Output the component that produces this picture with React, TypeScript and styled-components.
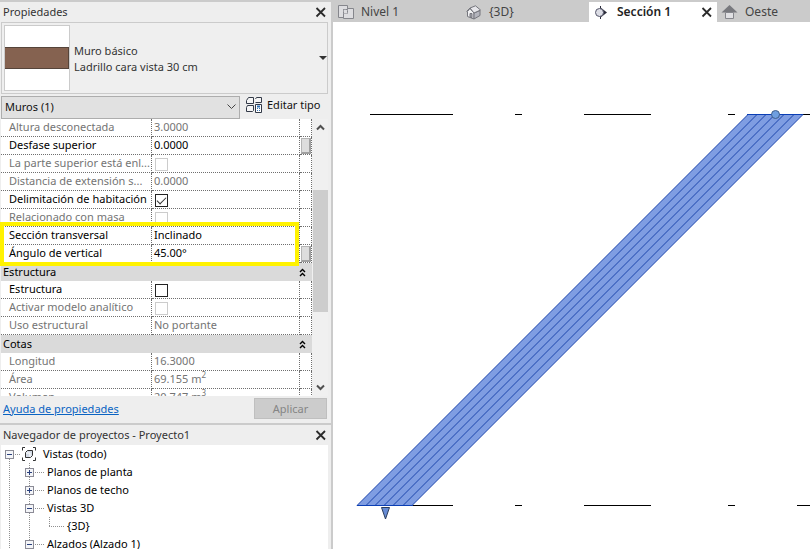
import React, { ReactNode } from "react";
import styled, { createGlobalStyle, css } from "styled-components";

const GlobalStyle = createGlobalStyle`
  *, *::before, *::after { box-sizing: border-box; }
  html, body, #root { height: 100%; }
  body {
    margin: 0;
    overflow: hidden;
    background: #ffffff;
    color: #111111;
    font: 11px/18px "Noto Sans", "Open Sans", sans-serif;
  }
  button, select, input { font: inherit; color: inherit; margin: 0; }
`;

const dots = "#6f6f6f";

const Shell = styled.div`
  display: grid;
  grid-template-columns: 333px minmax(0, 1fr);
  height: 100vh;
  overflow: hidden;
`;

const Sidebar = styled.aside`
  display: flex;
  flex-direction: column;
  min-height: 0;
  background: #eeeeee;
  border-top: 2px solid #cbcbcb;
  border-right: 2px solid #cbcbcb;
`;

const Panel = styled.section<{ $grow?: boolean }>`
  display: flex;
  flex-direction: column;
  padding: 0 3px 0 1px;
  ${(p) =>
    p.$grow &&
    css`
      flex: 1;
      min-height: 0;
      overflow: hidden;
      border-top: 2px solid #cbcbcb;
    `}
`;

const PanelHeader = styled.header`
  display: flex;
  align-items: center;
  justify-content: space-between;
  height: 20px;
  padding: 0 1px 0 2px;
  color: #333333;
`;

const PanelTitle = styled.h2`
  margin: 0;
  font: inherit;
`;

const IconButton = styled.button`
  display: flex;
  padding: 0;
  border: 0;
  background: none;
`;

const TypeSelector = styled.button`
  display: flex;
  align-items: center;
  gap: 4px;
  height: 72px;
  padding: 2px 0 2px 2px;
  border: 1px solid #cbcbcb;
  background: #efefef;
  color: #333333;
  text-align: left;
  line-height: 16px;
`;

const TypeThumb = styled.span`
  display: flex;
  align-items: center;
  width: 66px;
  height: 66px;
  border: 1px solid #cbcbcb;
  background: #ffffff;
`;

const Brick = styled.span`
  flex: 1;
  height: 22px;
  border: solid #55443a;
  border-width: 1px 1px 1px 0;
  background: #856250;
`;

const TypeName = styled.span`
  flex: 1;
  padding-top: 2px;
`;

const InstanceBar = styled.div`
  display: flex;
  align-items: center;
  gap: 6px;
  height: 25px;
  padding-top: 1px;
`;

const SelectWrap = styled.div`
  display: grid;
  flex: 0 0 239px;
  align-items: center;
  justify-items: end;
  > * { grid-area: 1 / 1; }
  > svg { margin-right: 4px; pointer-events: none; }
`;

const InstanceSelect = styled.select`
  width: 100%;
  height: 23px;
  padding: 0 3px;
  border: 1px solid #adadad;
  border-radius: 0;
  background: #e1e1e1;
  appearance: none;
`;

const EditTypeButton = styled.button`
  display: flex;
  align-items: center;
  gap: 5px;
  padding: 0 0 4px;
  border: 0;
  background: none;
  white-space: nowrap;
`;

const GridArea = styled.div`
  display: flex;
  height: 277px;
  position: relative;
`;

const GridClip = styled.div`
  width: 311px;
  height: 100%;
  overflow: hidden;
  background: #ffffff;
`;

const Table = styled.table`
  width: 100%;
  table-layout: fixed;
  border-collapse: separate;
  border-spacing: 0;
`;

const Row = styled.tr`
  height: 18px;
`;

const LabelCell = styled.th<{ $dim?: boolean }>`
  height: 18px;
  padding: 0 0 0 8px;
  border-right: 1px dotted ${dots};
  border-bottom: 1px dotted ${dots};
  color: ${(p) => (p.$dim ? "#747474" : "#000000")};
  font-weight: 400;
  line-height: 15px;
  text-align: left;
  vertical-align: top;
  white-space: nowrap;
`;

const ValueCell = styled.td<{ $dim?: boolean }>`
  height: 18px;
  padding: 0 0 0 2px;
  border-right: 1px dotted ${dots};
  border-bottom: 1px dotted ${dots};
  color: ${(p) => (p.$dim ? "#747474" : "#000000")};
  line-height: 15px;
  vertical-align: top;
  white-space: nowrap;
  sup { font-size: 8px; line-height: 0; }
`;

const GroupCell = styled.th`
  height: 18px;
  padding: 0 6px 0 2px;
  background: #dadada;
  color: #000000;
  font-weight: 400;
  line-height: 16px;
`;

const GroupBar = styled.div`
  display: flex;
  align-items: center;
  justify-content: space-between;
`;

const ActionCell = styled.td`
  height: 18px;
  padding: 0 0 0 1px;
  border-right: 1px dotted ${dots};
  border-bottom: 1px dotted ${dots};
`;

const AssociateButton = styled.button`
  display: block;
  width: 10px;
  height: 16px;
  padding: 0;
  border: 1px solid #b4b4b4;
  border-right: 2px solid #a0a0a0;
  border-bottom: 2px solid #a0a0a0;
  background: #dddddd;
`;

const Check = styled.input`
  display: grid;
  place-items: center;
  width: 13px;
  height: 13px;
  margin: 3px 0 0 1px;
  border: 1px solid #222222;
  background: #ffffff;
  appearance: none;
  &:disabled { border-color: #cccccc; }
  &:checked::before {
    content: "";
    width: 9px;
    height: 5px;
    margin-top: -3px;
    border: solid #333333;
    border-width: 0 0 1px 1px;
    transform: rotate(-45deg);
  }
`;

const Highlight = styled.div`
  position: absolute;
  top: 103px;
  left: -1px;
  width: 299px;
  height: 44px;
  border: 4px solid #fff200;
  pointer-events: none;
`;

const ScrollBar = styled.div`
  display: flex;
  flex-direction: column;
  align-items: center;
  flex: 1;
  background: #f0f0f0;
`;

const ScrollButton = styled.button`
  display: flex;
  align-items: center;
  justify-content: center;
  width: 16px;
  height: 17px;
  padding: 0;
  border: 0;
  background: none;
`;

const ScrollTrack = styled.div`
  flex: 1;
  width: 15px;
  padding-top: 54px;
`;

const ScrollThumb = styled.div`
  height: 122px;
  background: #cdcdcd;
`;

const PanelFooter = styled.footer`
  display: flex;
  align-items: center;
  justify-content: space-between;
  height: 27px;
  padding: 0 1px 2px 2px;
`;

const HelpLink = styled.a`
  color: #0a63c2;
`;

const ApplyButton = styled.button`
  width: 73px;
  height: 21px;
  padding: 0;
  border: 1px solid #bfbfbf;
  background: #cccccc;
  &:disabled { color: #858585; }
`;

const Tree = styled.ul`
  flex: 1;
  min-height: 0;
  margin: 0;
  padding: 0;
  overflow: hidden;
  background: #ffffff;
  color: #000000;
  list-style: none;
`;

const TreeItem = styled.li`
  display: flex;
  align-items: center;
  height: 18px;
  white-space: nowrap;
`;

const TreeLabel = styled.span<{ $gap: number }>`
  padding-left: ${(p) => p.$gap}px;
  line-height: 16px;
`;

const Main = styled.main`
  display: flex;
  flex-direction: column;
  min-width: 0;
  min-height: 0;
`;

const Tabs = styled.nav`
  display: flex;
  height: 22px;
  padding-top: 2px;
  overflow: hidden;
  background: #cbcbcb;
`;

const Tab = styled.div<{ $active?: boolean }>`
  display: flex;
  flex: 0 0 128px;
  align-items: center;
  justify-content: space-between;
  padding: 0 4px;
  background: ${(p) => (p.$active ? "#ffffff" : "transparent")};
  color: ${(p) => (p.$active ? "#222222" : "#444444")};
  font-size: 12px;
  font-weight: ${(p) => (p.$active ? 600 : 400)};
`;

const TabButton = styled.button`
  display: flex;
  align-items: center;
  gap: 7px;
  padding: 0;
  border: 0;
  background: none;
`;

const Canvas = styled.div`
  flex: 1;
  min-height: 0;
  overflow: hidden;
  svg { display: block; }
`;

const CloseIcon = () => (
  <svg width="12" height="12" viewBox="0 0 12 12" aria-hidden="true">
    <path d="M1.5 2 10 10.5M10 2 1.5 10.5" stroke="#2b2b2b" strokeWidth="1.8" />
  </svg>
);

const Chevron = ({ up }: { up?: boolean }) => (
  <svg width="9" height="7" viewBox="0 0 9 7" aria-hidden="true">
    <path d={up ? "M1 5.5 4.5 2 8 5.5" : "M1 1.5 4.5 5 8 1.5"} fill="none" stroke="#505050" strokeWidth="2" />
  </svg>
);

const CollapseIcon = () => (
  <svg width="7" height="9" viewBox="0 0 7 9" aria-hidden="true">
    <path d="M1 4 3.5 1.5 6 4M1 8 3.5 5.5 6 8" fill="none" stroke="#000" strokeWidth="1.4" />
  </svg>
);

const EditTypeIcon = () => (
  <svg width="16" height="16" viewBox="0 0 16 16" fill="none" stroke="#333a48" aria-hidden="true">
    <path d="M1.5 2 2.5.5H7.5V6.5H.5V3.5ZM9.5 2 10.500.5H15.500V5.500H9.500M.5 10.5 1.5 8.5H7.5V13.5L6.5 14.5H.5Z" fill="#f6f6f6" />
    <path d="M9.5 7.5H15.5V15.5H9.5Z" fill="#fff" />
    <path d="M11 9.5H14" stroke="#2d6fb5" strokeWidth="2" />
    <path d="M11 11.5h1m1 0h1M11 13.5h1m1 0h1" stroke="#3b74ad" />
  </svg>
);

const PlanIcon = () => (
  <svg width="17" height="14" viewBox="0 0 17 14" fill="#dddde0" stroke="#85868c" aria-hidden="true">
    <path d="M1.5.5H10.5V4.5H6.5V12.5H1.5Z" />
    <path d="M10.5 3.5H16.5V13.5H6.5V8.5H10.5Z" />
    <path d="M6.5 8.5V4.5H10.5V8.5" strokeDasharray="2 1" />
  </svg>
);

const HouseIcon = () => (
  <svg width="17" height="15" viewBox="0 0 17 15" stroke="#74757c" strokeLinejoin="round" aria-hidden="true">
    <path d="M2.5 6.5 5 3.5 9 8V14L2.5 11.5Z" fill="#f0f0f2" />
    <path d="M9 8 15 5.5V10.5L9 14Z" fill="#b4b5bd" />
    <path d="M5 3 10.5.8 15.5 5 9 8Z" fill="#e6e6ea" />
    <path d="M1.5 6.5 5 3" fill="none" />
    <path d="M5 12V8.5H7V12.8Z" fill="#a5a6ad" />
  </svg>
);

const SectionIcon = () => (
  <svg width="17" height="15" viewBox="0 0 17 15" aria-hidden="true">
    <path d="M7 2 14 7.5 7 13Z" fill="#292a38" />
    <path d="M7.5 1V14" stroke="#292a38" />
    <circle cx="6.5" cy="7.5" r="4" fill="#dcdde5" stroke="#55566a" />
  </svg>
);

const ElevationIcon = () => (
  <svg width="17" height="15" viewBox="0 0 17 15" aria-hidden="true">
    <path d="M8.5 0 16.5 7.5H.5Z" fill="#78797e" />
    <path d="M4.5 7.5H12.5V13.5H4.5Z" fill="#e0e0e3" stroke="#85868c" />
  </svg>
);

const ViewsIcon = () => (
  <svg width="14" height="14" viewBox="0 0 14 14" fill="none" stroke="#333" aria-hidden="true">
    <path d="M3 .5H.5V3.5M11 .5H13.5V3.5M3 13.5H.5V10.5M11 13.5H13.5V10.5" />
    <path d="M3.5 5.5 5.5 3.5H10.5V8.5L8.5 10.5H3.5Z" fill="#d5dce7" />
    <path d="M4 6H8V10" stroke="#fff" />
  </svg>
);

type NodeKind = "root" | "closed" | "open" | "leaf";

const TreeLines = ({ kind }: { kind: NodeKind }) => {
  const width = kind === "root" ? 21 : kind === "leaf" ? 64 : 44;
  const boxX = kind === "root" ? 4 : 24;
  return (
    <svg width={width} height="18" viewBox={`0 0 ${width} 18`} shapeRendering="crispEdges" aria-hidden="true">
      <g stroke="#909090" strokeDasharray="1 1" fill="none">
        {kind === "root" ? <path d="M8.5 14V18M14 9.5H19" /> : <path d="M8.5 0V18M28.5 0V18" />}
        {(kind === "open" || kind === "closed") && <path d="M34 9.5H43" />}
        {kind === "leaf" && <path d="M48.5 0V10M48 9.5H63" />}
      </g>
      {kind !== "leaf" && (
        <g transform={`translate(${boxX} 5)`}>
          <rect x="0.5" y="0.5" width="8" height="8" fill="#f4f5f8" stroke="#8b8b96" />
          <path d={kind === "closed" ? "M2 4.5H7M4.5 2V7" : "M2 4.5H7"} stroke="#29407c" />
        </g>
      )}
    </svg>
  );
};

type Property =
  | { group: string }
  | { label: string; value?: ReactNode; check?: boolean; dim?: boolean; action?: boolean };

const properties: Property[] = [
  { label: "Altura desconectada", value: "3.0000", dim: true },
  { label: "Desfase superior", value: "0.0000", action: true },
  { label: "La parte superior está enl...", check: false, dim: true },
  { label: "Distancia de extensión s...", value: "0.0000", dim: true },
  { label: "Delimitación de habitación", check: true },
  { label: "Relacionado con masa", check: false, dim: true },
  { label: "Sección transversal", value: "Inclinado" },
  { label: "Ángulo de vertical", value: "45.00°", action: true },
  { group: "Estructura" },
  { label: "Estructura", check: false },
  { label: "Activar modelo analítico", check: false, dim: true },
  { label: "Uso estructural", value: "No portante", dim: true },
  { group: "Cotas" },
  { label: "Longitud", value: "16.3000", dim: true },
  { label: "Área", value: <>69.155 m<sup>2</sup></>, dim: true },
  { label: "Volumen", value: <>20.747 m<sup>3</sup></>, dim: true },
];

const PropertyRow = ({ item }: { item: Property }) => {
  if ("group" in item) {
    return (
      <Row>
        <GroupCell colSpan={3}>
          <GroupBar>
            {item.group}
            <IconButton aria-label={`Contraer ${item.group}`}><CollapseIcon /></IconButton>
          </GroupBar>
        </GroupCell>
      </Row>
    );
  }
  return (
    <Row>
      <LabelCell scope="row" $dim={item.dim}>{item.label}</LabelCell>
      <ValueCell $dim={item.dim}>
        {item.check === undefined ? (
          item.value
        ) : (
          <Check type="checkbox" aria-label={item.label} defaultChecked={item.check} disabled={item.dim} />
        )}
      </ValueCell>
      <ActionCell>{item.action && <AssociateButton aria-label={`Asociar ${item.label}`} />}</ActionCell>
    </Row>
  );
};

const nodes: { kind: NodeKind; label: string }[] = [
  { kind: "root", label: "Vistas (todo)" },
  { kind: "closed", label: "Planos de planta" },
  { kind: "closed", label: "Planos de techo" },
  { kind: "open", label: "Vistas 3D" },
  { kind: "leaf", label: "{3D}" },
  { kind: "open", label: "Alzados (Alzado 1)" },
];

const tabs = [
  { label: "Nivel 1", icon: <PlanIcon /> },
  { label: "{3D}", icon: <HouseIcon /> },
  { label: "Sección 1", icon: <SectionIcon />, active: true },
  { label: "Oeste", icon: <ElevationIcon /> },
];

const layers = [24, 33, 42, 51, 60, 70, 79];

const WallSection = () => (
  <svg width="477" height="527" viewBox="0 0 477 527" role="img" aria-label="Sección de muro inclinado">
    <path
      d="M37 92.5H120M182 92.5H189M251 92.5H318M395 92.5H402M464 92.5H477M80 483.5H120M182 483.5H189M251 483.5H318M395 483.5H402M464 483.5H477"
      stroke="#000"
      shapeRendering="crispEdges"
    />
    <path d="M24 483.5 415 92.5H470L79 483.5Z" fill="#7f9de2" />
    <g stroke="#1c44ab" fill="none">
      {layers.map((x) => (
        <path key={x} d={`M${x} 483.5 ${x + 391} 92.5`} />
      ))}
      <path d="M24 483.5H80M414 92.5H470" stroke="#0b3fb5" />
    </g>
    <circle cx="442.5" cy="92.5" r="4" fill="#6f9fe0" stroke="#3f5f8c" />
    <path d="M48.5 485.5H56.5L52.5 497Z" fill="#668bd4" stroke="#2b3d5c" />
  </svg>
);

export default function App() {
  return (
    <>
      <GlobalStyle />
      <Shell>
        <Sidebar>
          <Panel>
            <PanelHeader>
              <PanelTitle>Propiedades</PanelTitle>
              <IconButton aria-label="Cerrar propiedades"><CloseIcon /></IconButton>
            </PanelHeader>
            <TypeSelector>
              <TypeThumb><Brick /></TypeThumb>
              <TypeName>Muro básico<br />Ladrillo cara vista 30 cm</TypeName>
              <svg width="8" height="5" viewBox="0 0 8 5" aria-hidden="true"><path d="M0 0H8L4 4Z" fill="#333" /></svg>
            </TypeSelector>
            <InstanceBar>
              <SelectWrap>
                <InstanceSelect aria-label="Categoría"><option>Muros (1)</option></InstanceSelect>
                <svg width="9" height="6" viewBox="0 0 9 6" aria-hidden="true"><path d="M.5.5 4.5 4.5 8.5.5" fill="none" stroke="#444" /></svg>
              </SelectWrap>
              <EditTypeButton><EditTypeIcon />Editar tipo</EditTypeButton>
            </InstanceBar>
            <GridArea>
              <GridClip>
                <Table aria-label="Propiedades del muro">
                  <colgroup><col width="151" /><col width="148" /><col width="12" /></colgroup>
                  <tbody>
                    {properties.map((item, i) => <PropertyRow key={i} item={item} />)}
                  </tbody>
                </Table>
              </GridClip>
              <ScrollBar>
                <ScrollButton aria-label="Subir"><Chevron up /></ScrollButton>
                <ScrollTrack><ScrollThumb /></ScrollTrack>
                <ScrollButton aria-label="Bajar"><Chevron /></ScrollButton>
              </ScrollBar>
              <Highlight />
            </GridArea>
            <PanelFooter>
              <HelpLink href="#ayuda">Ayuda de propiedades</HelpLink>
              <ApplyButton disabled>Aplicar</ApplyButton>
            </PanelFooter>
          </Panel>
          <Panel $grow>
            <PanelHeader>
              <PanelTitle>Navegador de proyectos - Proyecto1</PanelTitle>
              <IconButton aria-label="Cerrar navegador"><CloseIcon /></IconButton>
            </PanelHeader>
            <Tree>
              {nodes.map((node) => (
                <TreeItem key={node.label}>
                  <TreeLines kind={node.kind} />
                  {node.kind === "root" && <ViewsIcon />}
                  <TreeLabel $gap={node.kind === "root" ? 7 : 2}>{node.label}</TreeLabel>
                </TreeItem>
              ))}
            </Tree>
          </Panel>
        </Sidebar>
        <Main>
          <Tabs aria-label="Vistas abiertas">
            {tabs.map((tab) => (
              <Tab key={tab.label} $active={tab.active}>
                <TabButton aria-current={tab.active ? "page" : undefined}>{tab.icon}{tab.label}</TabButton>
                {tab.active && <IconButton aria-label="Cerrar vista"><CloseIcon /></IconButton>}
              </Tab>
            ))}
          </Tabs>
          <Canvas><WallSection /></Canvas>
        </Main>
      </Shell>
    </>
  );
}
